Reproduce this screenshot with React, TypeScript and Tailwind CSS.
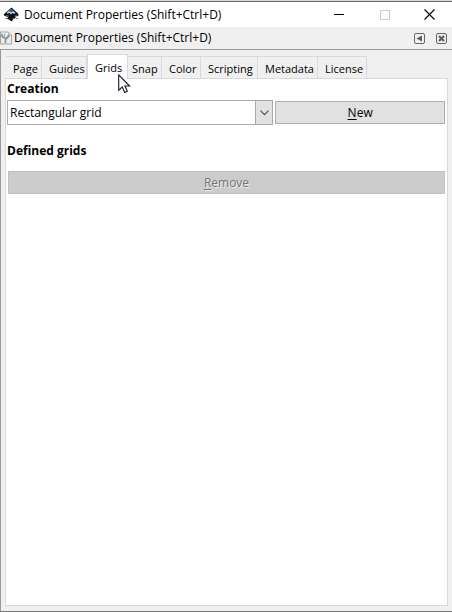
import { useState } from "react";

const tabs = [
  { name: "Page", width: "w-9", pad: "pl-[7px]" },
  { name: "Guides", width: "w-[45px]", pad: "pl-[7px]" },
  { name: "Grids", width: "w-[41px]", pad: "pl-[7px]" },
  { name: "Snap", width: "w-[34px]", pad: "pl-[4px]" },
  { name: "Color", width: "w-[39px]", pad: "pl-[7px]" },
  { name: "Scripting", width: "w-[57px]", pad: "pl-[7px]" },
  { name: "Metadata", width: "w-[60px]", pad: "pl-[7px]" },
  { name: "License", width: "w-[49px]", pad: "pl-[7px]" },
];

function InkscapeLogo() {
  return (
    <svg width="17" height="16" viewBox="0 0 17 16" aria-hidden="true">
      <path d="M8.5 0.5 L15 6.5 Q16.5 8.5 14 9.2 L11.5 9.7 L13 10.8 L11.3 11.7 L9.7 11.5 L10 13 L8.3 14.5 L6.8 13.1 L5 12.3 L3.5 11 L5.5 10.5 L4.5 9.7 L1.8 9 Q0 8.2 1.3 6.8 Z" fill="#101114" />
      <path d="M8 1.7 L12.7 6 L10.8 7 L9.3 6 L8 7.4 L6.3 6 L3.8 6.8 L4 5.3 Z" fill="#b5c9de" />
      <path d="M8.2 1.4 L11 4 L8.3 5 L5.5 4.2 Z" fill="#3e526a" />
      <path d="M3 8.3 L6 9 M12 8.5 L14 8" stroke="#68727e" strokeWidth="0.8" />
      <path d="M2.5 11.5 h1 M13.5 11.5 h1.2" stroke="#222" />
    </svg>
  );
}

function DocumentIcon() {
  return (
    <svg width="12" height="14" viewBox="0 0 12 14" aria-hidden="true">
      <path d="M0.5 1 H8.5 L11.5 4 V13 H0.5 Z" fill="#ededeb" stroke="#a3a3a0" />
      <path d="M8.5 1 V4 H11.5" fill="#ddd" stroke="#b4b4b4" strokeWidth="0.7" />
      <path d="M2 3 V5.5 L5.5 7.5 V12" fill="none" stroke="#81909b" strokeWidth="1.6" />
      <path d="M9.5 4 L6 8" fill="none" stroke="#8d989f" strokeWidth="2" />
      <path d="M4.5 3 V5.5" stroke="#8f999f" strokeWidth="1" fill="none" />
    </svg>
  );
}

function Pointer() {
  return (
    <svg width="13" height="20" viewBox="0 0 13 20" className="pointer-events-none absolute top-[20px] left-8 z-20" aria-hidden="true">
      <path d="M0.7 0.9 V16.3 L4.2 13 L6.7 18.5 L9.3 17.3 L6.9 12 H11.6 Z" fill="#fff" stroke="#171725" strokeWidth="1.1" />
    </svg>
  );
}

export default function App() {
  const [active, setActive] = useState("Grids");
  return (
    <div className="flex min-h-screen flex-col border-b border-[#777] bg-[#f0f0f0] font-['Open_Sans','Noto_Sans',sans-serif] text-[12px] leading-4 text-black">
      <header className="flex h-[27px] items-center border-t border-[#d8d8d8] bg-white">
        <div className="flex h-full w-full items-center border-t border-[#6a6a6a] pl-[3px]">
          <InkscapeLogo />
          <h1 className="ml-1 flex-1 whitespace-nowrap">Document Properties (Shift+Ctrl+D)</h1>
          <button aria-label="Minimize" className="flex h-full w-[46px] items-center justify-center">
            <svg width="10" height="11"><path d="M0 5.5 H10" stroke="#000" /></svg>
          </button>
          <button aria-label="Maximize" disabled className="flex h-full w-[45px] items-center justify-center">
            <svg width="10" height="10"><rect x="0.5" y="0.5" width="9" height="9" fill="none" stroke="#ccc" /></svg>
          </button>
          <button aria-label="Close" className="flex h-full w-[45px] items-center justify-center">
            <svg width="11" height="11"><path d="M0.5 0.5 L10.5 10.5 M10.5 0.5 L0.5 10.5" stroke="#000" strokeWidth="1.1" /></svg>
          </button>
        </div>
      </header>
      <div className="flex h-[23px] items-center border-b border-[#999] pr-[5px]">
        <DocumentIcon />
        <h2 className="ml-[2px] flex-1 whitespace-nowrap">Document Properties (Shift+Ctrl+D)</h2>
        <button aria-label="Iconify dialog" className="mr-[11px]">
          <svg width="11" height="11"><rect x="0.5" y="0.5" width="10" height="10" rx="1.5" fill="none" stroke="#686868" /><path d="M8 2.5 V8.5 L2.5 5.5 Z" fill="#5e5e5e" /></svg>
        </button>
        <button aria-label="Close dialog">
          <svg width="11" height="11"><rect x="0.5" y="0.5" width="10" height="10" rx="1.5" fill="none" stroke="#686868" /><path d="M3 3 L8 8 M8 3 L3 8" stroke="#5e5e5e" strokeWidth="2.2" /></svg>
        </button>
      </div>
      <main className="flex flex-1 flex-col border-l border-[#999] pt-1 pr-1 pb-[5px] pl-1">
        <div role="tablist" className="flex h-6 items-end pl-px">
          {tabs.map((tab) => {
            const selected = active === tab.name;
            return (
              <div key={tab.name} className={`relative ${tab.width} ${selected ? "-ml-px box-content pl-px" : ""}`}>
                <button
                  role="tab"
                  aria-selected={selected}
                  onClick={() => setActive(tab.name)}
                  className={`block w-full border-t border-r border-[#d9d9d9] text-left text-[11px] whitespace-nowrap ${tab.pad} ${selected ? "relative z-10 -mb-px h-[25px] border-l bg-white pt-px" : "h-[22px] pt-[3px]"}`}
                >
                  {tab.name}
                </button>
                {tab.name === "Grids" && <Pointer />}
              </div>
            );
          })}
        </div>
        <section role="tabpanel" aria-label={active} className="flex-1 border border-[#d9d9d9] bg-white pt-[2px] pr-[2px] pl-px">
          <h3 className="font-bold"><label htmlFor="grid-type">Creation</label></h3>
          <div className="mt-[3px] flex items-center gap-[2px]">
            <div className="relative flex-[270]">
              <select id="grid-type" className="block h-[25px] w-full appearance-none border border-[#acacac] bg-white pl-[2px]">
                <option>Rectangular grid</option>
                <option>Axonometric grid</option>
              </select>
              <span className="pointer-events-none absolute inset-y-0 right-0 flex w-[18px] items-center justify-center border border-[#a5a8ad] bg-[#e1e1e1]">
                <svg width="9" height="6"><path d="M0.5 0.7 L4.5 4.7 L8.5 0.7" fill="none" stroke="#505050" strokeWidth="1.2" /></svg>
              </span>
            </div>
            <button className="h-[23px] flex-[170] border border-[#adadad] bg-[#e1e1e1]"><span className="underline underline-offset-2">N</span>ew</button>
          </div>
          <h3 className="mt-[18px] font-bold">Defined grids</h3>
          <div className="mt-3 flex pl-px">
            <button disabled className="h-[23px] flex-1 border border-[#bfbfbf] bg-[#ccc] text-[#777] [text-shadow:1px_1px_0_#eee]"><span className="underline underline-offset-2">R</span>emove</button>
          </div>
        </section>
      </main>
    </div>
  );
}
